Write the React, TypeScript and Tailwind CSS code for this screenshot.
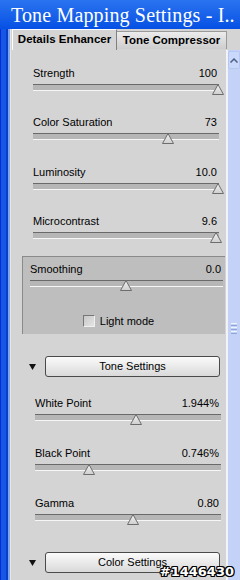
import React from 'react';

type SliderProps = {
  label: string;
  value: string;
  thumb: number; // thumb center, px from the track's left edge
  className?: string;
};

const Thumb: React.FC<{ left: number }> = ({ left }) => (
  <svg
    className="absolute -top-[1px]"
    style={{ left: left - 6 }}
    width="12"
    height="11"
    viewBox="0 0 12 11"
  >
    <defs>
      <linearGradient id="thumbFill" x1="0" y1="0" x2="0" y2="1">
        <stop offset="0" stopColor="#f2f2f2" />
        <stop offset="1" stopColor="#cfcfcf" />
      </linearGradient>
    </defs>
    <path d="M6 0.5 L11.5 10.5 L0.5 10.5 Z" fill="url(#thumbFill)" stroke="#6d6d6d" strokeWidth="1" />
  </svg>
);

const Slider: React.FC<SliderProps> = ({ label, value, thumb, className }) => (
  <div className={className}>
    <div className="flex items-center justify-between h-[13px] text-[11px] leading-[13px] text-black pr-[2px]">
      <span>{label}</span>
      <span>{value}</span>
    </div>
    <div className="relative mt-[4px] h-[7px] border-t border-[#6a6a6a] border-b border-b-[#f6f6f6] bg-[#b6b6b6]">
      <Thumb left={thumb} />
    </div>
  </div>
);

const SectionButton: React.FC<{ label: string; className?: string }> = ({ label, className }) => (
  <div className={`flex items-center ${className ?? ''}`}>
    <div className="w-[18px] flex justify-start pl-[2px]">
      <svg width="7" height="6" viewBox="0 0 7 6">
        <path d="M0 0 L7 0 L3.5 6 Z" fill="#111" />
      </svg>
    </div>
    <button className="flex-1 h-[21px] rounded-[3px] border border-[#4a4a4a] bg-gradient-to-b from-[#fbfbfb] to-[#d9d9d9] text-[11px] text-black flex items-center justify-center">
      {label}
    </button>
  </div>
);

export default function App() {
  return (
    <div className="relative w-[240px] h-[580px] overflow-hidden flex flex-col bg-[#d4d4d4] font-['Liberation_Sans',Arial,sans-serif]">
      {/* Title bar */}
      <div className="h-[29px] shrink-0 bg-gradient-to-b from-[#2a73f0] to-[#0550e4] flex items-center pl-[11px] whitespace-nowrap">
        <span className="text-white text-[20px] leading-none tracking-[0.15px] font-['Liberation_Serif','Times_New_Roman',serif]">
          Tone Mapping Settings - I..
        </span>
      </div>

      <div className="flex flex-1 min-h-0">
        {/* Window frame, left */}
        <div className="w-[12px] shrink-0 bg-[linear-gradient(to_right,#0a2ccf_0px,#0a2ccf_1px,#1558e6_1px,#1558e6_6px,#0a3ec8_6px,#0a3ec8_8px,#7fa4ef_8px,#7fa4ef_10px,#e6e6e6_10px,#e6e6e6_11px,#d4d4d4_11px)]" />

        <div className="flex-1 flex flex-col min-w-0">
          {/* Tabs */}
          <div className="h-[21px] shrink-0 flex items-end text-[11.5px] font-bold text-black">
            <div className="h-[21px] w-[105px] border-t border-l border-white border-r border-r-[#808080] bg-[#d4d4d4] flex items-center justify-center">
              Details Enhancer
            </div>
            <div className="h-[18px] w-[110px] mb-[1px] border-t border-r border-[#9a9a9a] bg-gradient-to-b from-[#ececec] to-[#cdcdcd] flex items-center justify-center">
              Tone Compressor
            </div>
          </div>

          <div className="flex flex-1 min-h-0">
            {/* Panel content */}
            <div className="flex-1 flex flex-col border-r border-[#f4f4f4]">
              <div className="pl-[21px] pr-[7px] pt-[17px]">
                <Slider label="Strength" value="100" thumb={185} />
                <Slider label="Color Saturation" value="73" thumb={135} className="mt-[25px]" />
                <Slider label="Luminosity" value="10.0" thumb={185} className="mt-[26px]" />
                <Slider label="Microcontrast" value="9.6" thumb={183} className="mt-[25px]" />
              </div>

              {/* Smoothing group */}
              <div className="mt-[17px] ml-[10px] mr-[1px] h-[78px] bg-[#bebebe] border-t border-l border-[#8a8a8a] pl-[7px] pr-[2px] pt-[6px]">
                <Slider label="Smoothing" value="0.0" thumb={96} />
                <div className="mt-[26px] flex items-center justify-center gap-[5px] text-[11px] text-black pr-[16px]">
                  <span className="w-[12px] h-[12px] border border-[#777] border-r-[#f0f0f0] border-b-[#f0f0f0] bg-gradient-to-br from-[#c8c8c8] to-[#e4e4e4]" />
                  <span>Light mode</span>
                </div>
              </div>

              <SectionButton label="Tone Settings" className="mt-[22px] pl-[15px] pr-[6px]" />

              <div className="pl-[23px] pr-[5px] mt-[20px]">
                <Slider label="White Point" value="1.944%" thumb={101} />
                <Slider label="Black Point" value="0.746%" thumb={54} className="mt-[26px]" />
                <Slider label="Gamma" value="0.80" thumb={98} className="mt-[26px]" />
              </div>

              <SectionButton label="Color Settings" className="mt-[31px] pl-[15px] pr-[6px]" />
            </div>

            {/* Scrollbar */}
            <div className="w-[13px] shrink-0 flex flex-col bg-[#c3d2f6] border-l border-[#eef2fc]">
              <div className="h-[18px] mt-[1px] rounded-[2px] border border-[#b5c8f2] bg-[#c9d8fb] flex items-center justify-center">
                <svg width="8" height="5" viewBox="0 0 8 5">
                  <path d="M0.5 4.5 L4 1 L7.5 4.5" fill="none" stroke="#4d6185" strokeWidth="1.5" />
                </svg>
              </div>
              <div className="flex-1 flex items-center justify-center pt-[18px]">
                <div className="flex flex-col gap-[1px] mb-[10px]">
                  <span className="block w-[6px] h-[1px] bg-[#eef3fe]" />
                  <span className="block w-[6px] h-[1px] bg-[#8da6d8]" />
                  <span className="block w-[6px] h-[1px] bg-[#eef3fe]" />
                  <span className="block w-[6px] h-[1px] bg-[#8da6d8]" />
                  <span className="block w-[6px] h-[1px] bg-[#eef3fe]" />
                  <span className="block w-[6px] h-[1px] bg-[#8da6d8]" />
                </div>
              </div>
            </div>
          </div>
        </div>
      </div>

      {/* Watermark */}
      <span className="absolute right-[6px] bottom-[2px] text-[13px] font-bold leading-none text-white font-['DejaVu_Sans',sans-serif] [text-shadow:1px_0_0_#000,-1px_0_0_#000,0_1px_0_#000,0_-1px_0_#000,1px_1px_0_#000,-1px_-1px_0_#000,1px_-1px_0_#000,-1px_1px_0_#000]">
        #1446430
      </span>
    </div>
  );
}
